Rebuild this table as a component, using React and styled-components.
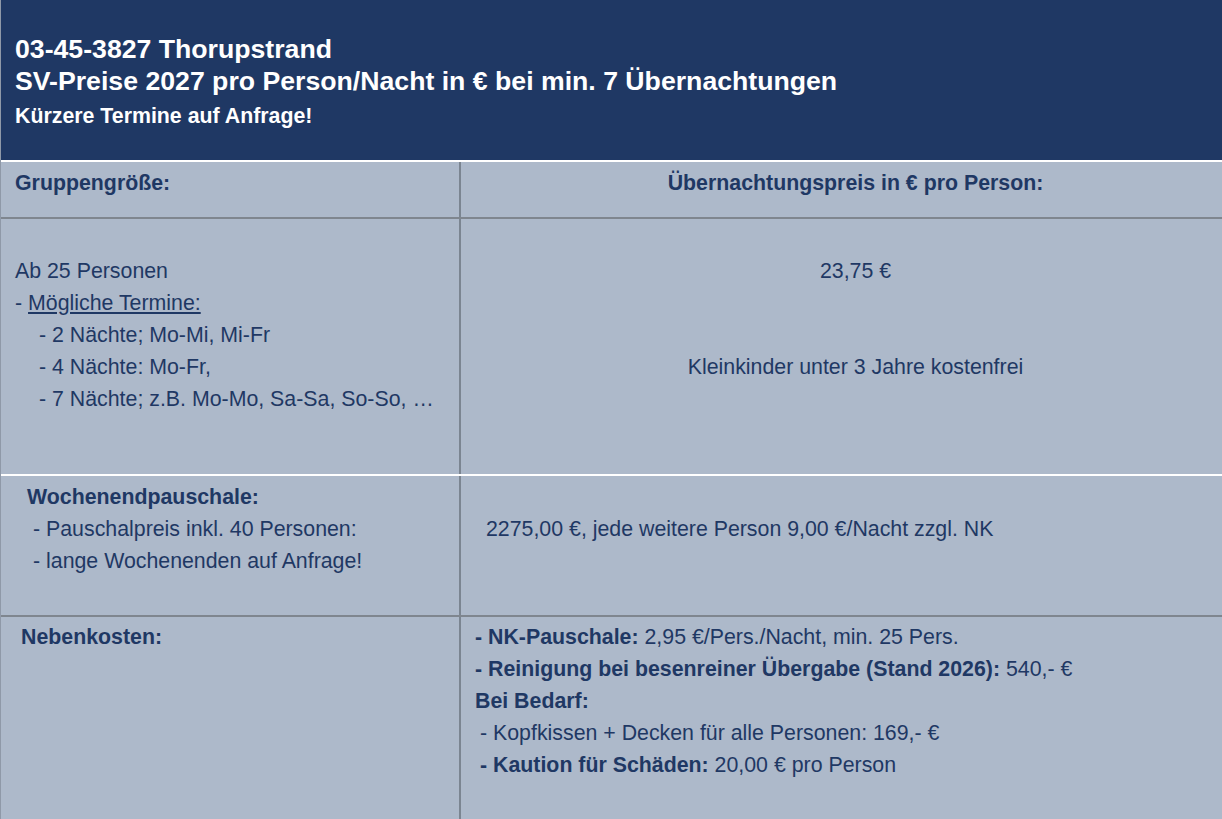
import React from "react";
import styled, { createGlobalStyle } from "styled-components";

const Global = createGlobalStyle`
  html, body { margin: 0; padding: 0; background: #adb9ca; }
  body { font-family: "Liberation Sans", Arial, sans-serif; }
`;

const Page = styled.div`
  width: 1222px;
  height: 819px;
  overflow: hidden;
  background: #adb9ca;
  box-sizing: border-box;
  border-left: 1px solid #8f99a8;
  color: #1f3864;
  font-family: "Liberation Sans", Arial, sans-serif;
`;

const Header = styled.header`
  height: 162px;
  box-sizing: border-box;
  background: #1f3864;
  color: #ffffff;
  padding: 33px 0 0 14px;
  border-bottom: 2px solid #ffffff;
`;

const Title = styled.div`
  font-size: 26.67px;
  font-weight: bold;
  line-height: 32px;
`;

const Subtitle = styled.div`
  font-size: 21.33px;
  font-weight: bold;
  line-height: 32px;
  margin-top: 3px;
`;

const sepColor = { white: "#ffffff", grey: "#7f868f", none: "transparent" };

const Row = styled.div`
  display: grid;
  grid-template-columns: 458px 1fr;
  height: ${(p) => p.$h}px;
  box-sizing: border-box;
  border-bottom: ${(p) => (p.$sep === "none" ? "0" : "2px")} solid ${(p) => sepColor[p.$sep]};
`;

const Cell = styled.div`
  box-sizing: border-box;
  padding-top: ${(p) => p.$top ?? 4}px;
  padding-left: ${(p) => p.$left ?? 14}px;
  text-align: ${(p) => (p.$center ? "center" : "left")};
  font-size: 21.33px;
  line-height: 32px;
`;

const RightCell = styled(Cell)`
  border-left: 2px solid #7b8591;
`;

const Line = styled.div`
  padding-left: ${(p) => p.$indent || 0}px;
  font-weight: ${(p) => (p.$bold ? "bold" : "normal")};
  min-height: 32px;
`;

const B = styled.span`
  font-weight: bold;
`;

const U = styled.span`
  text-decoration: underline;
  text-underline-offset: 2px;
`;

export default function App() {
  return (
    <>
      <Global />
      <Page>
        <Header>
          <Title>03-45-3827 Thorupstrand</Title>
          <Title>SV-Preise 2027 pro Person/Nacht in € bei min. 7 Übernachtungen</Title>
          <Subtitle>Kürzere Termine auf Anfrage!</Subtitle>
        </Header>

        <Row $h={57} $sep="grey">
          <Cell $top={5}>
            <Line $bold>Gruppengröße:</Line>
          </Cell>
          <RightCell $top={5} $left={28} $center>
            <Line $bold>Übernachtungspreis in € pro Person:</Line>
          </RightCell>
        </Row>

        <Row $h={257} $sep="white">
          <Cell $top={36}>
            <Line>Ab 25 Personen</Line>
            <Line>
              - <U>Mögliche Termine:</U>
            </Line>
            <Line $indent={24}>- 2 Nächte; Mo-Mi, Mi-Fr</Line>
            <Line $indent={24}>- 4 Nächte: Mo-Fr,</Line>
            <Line $indent={24}>- 7 Nächte; z.B. Mo-Mo, Sa-Sa, So-So, …</Line>
          </Cell>
          <RightCell $top={36} $left={28} $center>
            <Line>23,75 €</Line>
            <Line />
            <Line />
            <Line>Kleinkinder unter 3 Jahre kostenfrei</Line>
          </RightCell>
        </Row>

        <Row $h={141} $sep="grey">
          <Cell $top={5} $left={26}>
            <Line $bold>Wochenendpauschale:</Line>
            <Line $indent={6}>- Pauschalpreis inkl. 40 Personen:</Line>
            <Line $indent={6}>- lange Wochenenden auf Anfrage!</Line>
          </Cell>
          <RightCell $top={5} $left={25}>
            <Line />
            <Line>2275,00 €, jede weitere Person 9,00 €/Nacht zzgl. NK</Line>
          </RightCell>
        </Row>

        <Row $h={202} $sep="none">
          <Cell $top={4} $left={20}>
            <Line $bold>Nebenkosten:</Line>
          </Cell>
          <RightCell $top={4} $left={14}>
            <Line>
              <B>- NK-Pauschale:</B> 2,95 €/Pers./Nacht, min. 25 Pers.
            </Line>
            <Line>
              <B>- Reinigung bei besenreiner Übergabe (Stand 2026):</B> 540,- €
            </Line>
            <Line $bold>Bei Bedarf:</Line>
            <Line $indent={5}>- Kopfkissen + Decken für alle Personen: 169,- €</Line>
            <Line $indent={5}>
              <B>- Kaution für Schäden:</B> 20,00 € pro Person
            </Line>
          </RightCell>
        </Row>
      </Page>
    </>
  );
}
